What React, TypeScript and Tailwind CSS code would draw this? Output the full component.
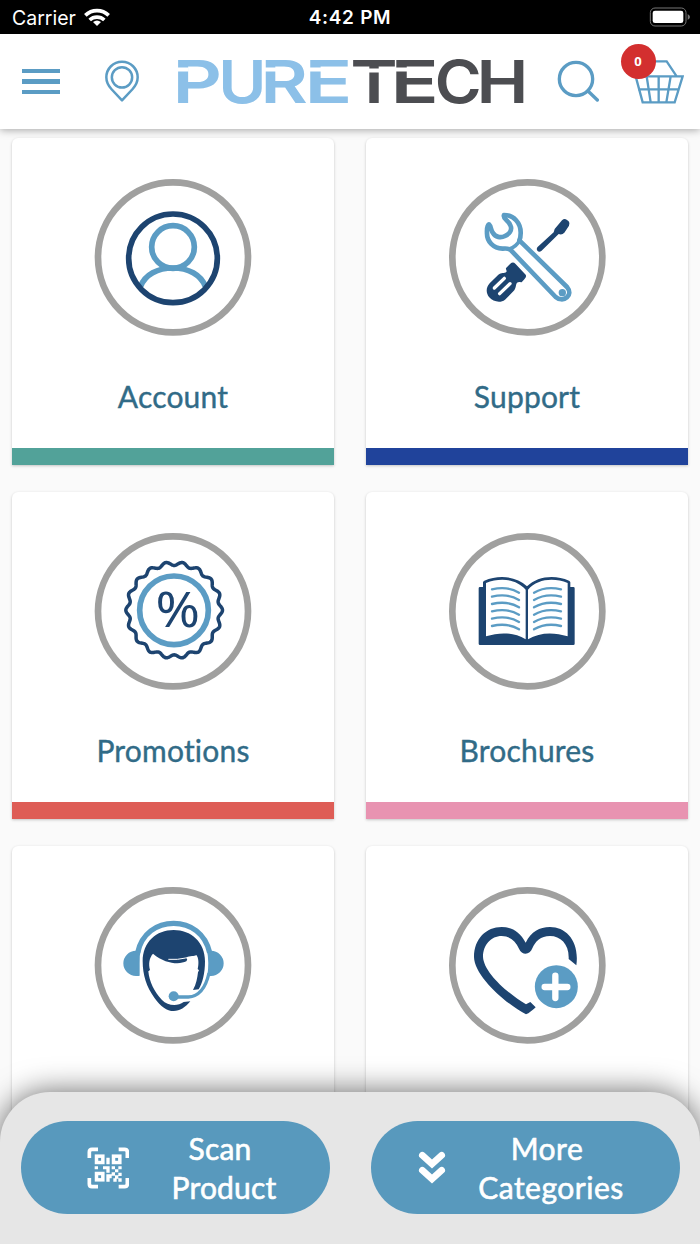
import type { ReactNode } from "react";

const NAVY = "#1d4470";
const BLUE = "#5b9cc4";

function Wifi() {
  return (
    <svg className="-mt-[3px] h-[18px] w-[26px]" viewBox="0 0 78 54" fill="none" stroke="#fff" strokeWidth="11">
      <path d="M4 22A50 50 0 0 1 74 22" />
      <path d="M17 36A32 32 0 0 1 61 36" />
      <path d="M39 54L27 42Q39 33 51 42Z" fill="#fff" stroke="none" />
    </svg>
  );
}

function Battery() {
  return (
    <svg className="h-[20px] w-[42px]" viewBox="0 0 126 60" fill="none">
      <rect x="4" y="3" width="107" height="54" rx="14" stroke="#777" strokeWidth="3" />
      <rect x="11" y="11" width="92" height="37" rx="7" fill="#fff" />
      <path d="M116 21Q123 25 123 30Q123 35 116 39Z" fill="#777" />
    </svg>
  );
}

function PinIcon() {
  return (
    <svg className="h-[42px] w-[36px]" viewBox="0 0 108 126" fill="none" stroke={BLUE} strokeWidth="7.5">
      <path d="M54 121L22 87C12 76 7 65 7 52A47 47 0 0 1 101 52C101 65 96 76 86 87Z" strokeLinejoin="round" />
      <circle cx="54" cy="52" r="30.5" />
    </svg>
  );
}

const logoLetters = [
  { letter: "P", x: -4.6, stretch: 1.29, fill: "#8cc0e8" },
  { letter: "U", x: 41.3, stretch: 1.1, fill: "#8cc0e8" },
  { letter: "R", x: 83.4, stretch: 1.22, fill: "#8cc0e8" },
  { letter: "E", x: 127.6, stretch: 1.33, fill: "#8cc0e8" },
  { letter: "T", x: 173.3, stretch: 1.21, fill: "#4c4d51" },
  { letter: "E", x: 213.4, stretch: 1.34, fill: "#4c4d51" },
  { letter: "C", x: 257.8, stretch: 1.07, fill: "#4c4d51" },
  { letter: "H", x: 299.6, stretch: 1.17, fill: "#4c4d51" },
];

function Logo() {
  return (
    <svg
      className="h-[74px] w-[350px] overflow-visible"
      viewBox="0 -12 350 74"
      fontFamily="Inter, sans-serif"
      fontWeight="600"
      fontSize="59.5"
    >
      {logoLetters.map(({ letter, x, stretch, fill }, i) => (
        <text key={i} y="47" transform={`translate(${x} 0) scale(${stretch} 1)`} fill={fill}>
          {letter}
        </text>
      ))}
      <g fill="#fff">
        <rect x="-1" y="11.5" width="12.5" height="4" />
        <rect x="87" y="11.5" width="12" height="4" />
        <rect x="131" y="11.5" width="13" height="4" />
        <rect x="188" y="12.5" width="15" height="4" />
        <rect x="217" y="11.5" width="13" height="4" />
      </g>
    </svg>
  );
}

function SearchIcon() {
  return (
    <svg className="h-[42px] w-[42px]" viewBox="0 0 126 126" fill="none" stroke={BLUE} strokeLinecap="round">
      <circle cx="57" cy="57" r="50" strokeWidth="10" />
      <path d="M93 93L121 120" strokeWidth="10" />
    </svg>
  );
}

function BasketIcon() {
  return (
    <svg className="h-[44px] w-[50px]" viewBox="0 0 150 132" fill="none" stroke={BLUE} strokeWidth="7">
      <path d="M20 49L45 4H98L128 49M2 49H146L122 127H26L5 49M12 88H134M38 49L50 127M74 49V127M110 49L97 127" />
    </svg>
  );
}

function AccountArt() {
  return (
    <g fill="none" strokeWidth="17">
      <circle cx="264" cy="231" r="64" stroke={BLUE} />
      <path d="M167 349C180 314 218 294 264 294S347 314 361 349" stroke={BLUE} />
      <circle cx="264" cy="265" r="133" stroke={NAVY} />
    </g>
  );
}

function SupportArt() {
  return (
    <g>
      <path
        d="M292 232L341 187L344 177L366 151Q373 144 380 149L386 154Q391 160 387 167L373 188Q366 196 356 192L304 243Q297 248 292 242Q288 237 292 232Z"
        fill={NAVY}
      />
      <path
        d="M211 281Q219 274 226 281L257 314Q261 320 253 328L245 337Q236 334 231 338C227 343 229 354 220 364L195 389C181 400 159 395 147 381C137 368 138 352 149 340L175 314C184 307 193 311 199 306C202 300 195 298 199 293Z"
        fill={NAVY}
      />
      <g stroke="#fff" strokeWidth="10" strokeLinecap="round">
        <path d="M163 354L193 325" />
        <path d="M179 371L210 341" />
      </g>
      <g fill="none" stroke={BLUE} strokeWidth="14" strokeLinejoin="round" strokeLinecap="round">
        <path d="M192 135C221 135 243 159 242 190Q242 203 238 211L381 351C391 363 389 375 381 382C371 391 356 389 347 381L211 239Q202 234 188 236C160 234 140 215 141 188Q140 167 147 163C153 168 153 183 159 189C166 201 182 205 195 198C207 192 217 181 212 168C208 151 187 148 192 135Z" />
        <path d="M239 211Q229 230 208 237" strokeWidth="11" />
      </g>
      <circle cx="367" cy="368" r="11" fill={BLUE} />
    </g>
  );
}

const sealPath =
  Array.from({ length: 361 }, (_, i) => {
    const t = (i * Math.PI) / 180;
    const r = 139.5 + 5.5 * Math.cos(18 * t);
    return `${i ? "L" : "M"}${(267.5 + r * Math.cos(t)).toFixed(1)} ${(255.5 + r * Math.sin(t)).toFixed(1)}`;
  }).join("") + "Z";

function PromotionsArt() {
  return (
    <g fill="none">
      <path d={sealPath} stroke={NAVY} strokeWidth="10.5" strokeLinejoin="round" />
      <circle cx="267" cy="256" r="103" stroke={BLUE} strokeWidth="17" />
      <text
        x="252.7"
        y="307"
        textAnchor="middle"
        transform="scale(1.1 1)"
        fontFamily="Noto Sans, sans-serif"
        fontSize="146"
        fill={NAVY}
      >
        %
      </text>
    </g>
  );
}

function BrochuresArt() {
  const rows = [188, 210, 232, 254, 276, 298];
  return (
    <g>
      <path
        d="M120 186H129V172Q129 169 133 167C176 148 229 153 261 184C292 153 345 148 387 167Q391 169 391 172V186H400Q404 186 404 190V356Q404 360 400 360H120Q116 360 116 356V190Q116 186 120 186Z"
        fill={NAVY}
      />
      <path d="M138 174C180 157 229 161 257 194V343C221 321 179 321 138 334Z" fill="#fff" />
      <path d="M383 174C342 157 292 161 264 194V343C299 321 342 321 383 334Z" fill="#fff" />
      <g fill="none" stroke={BLUE} strokeWidth="7" strokeLinecap="round">
        {rows.map((y) => (
          <g key={y}>
            <path d={`M156 ${y + 5}Q202 ${y - 6} 237 ${y + 15}`} />
            <path d={`M363 ${y + 5}Q318 ${y - 6} 282 ${y + 15}`} />
          </g>
        ))}
      </g>
    </g>
  );
}

function AgentArt() {
  return (
    <g>
      <path d="M153 218A38 38 0 0 0 153 294Q159 295 164 293V255Q163 235 167 217Z" fill={BLUE} />
      <path d="M378 218A38 38 0 0 1 378 294L367 295Q373 250 366 218Z" fill={BLUE} />
      <path d="M158 224C170 166 216 136 266 136S361 166 374 224" fill="none" stroke={BLUE} strokeWidth="16" />
      <path
        d="M173 250C173 192 214 156 266 156S360 192 360 250C360 286 352 318 341 334L324 336C334 318 337 300 339 283L342 277L338 273C342 257 341 239 334 231C327 236 318 231 300 240C309 241 307 246 304 250C285 260 242 259 204 227C193 239 190 258 195 276L190 280C193 312 208 341 231 366C248 384 278 386 296 372L316 370C300 389 285 399 266 399C245 399 228 386 208 359C185 328 173 291 173 250Z"
        fill={NAVY}
      />
      <path d="M250 244Q278 246 302 240" stroke="#fff" strokeWidth="3" fill="none" />
      <path d="M372 285C363 326 344 355 310 357H270" fill="none" stroke={BLUE} strokeWidth="10" />
      <circle cx="266" cy="355" r="15" fill={BLUE} />
    </g>
  );
}

function FavouritesArt() {
  return (
    <g>
      <path
        d="M409 262L386 243C388 199 362 174 330 174C302 174 286 190 277 211C270 231 246 233 237 212C226 188 209 174 185 174C153 174 129 201 129 236C131 283 202 345 258 379L271 372L287 388C279 395 267 407 258 409C203 381 103 297 102 237C102 182 139 147 185 147C216 147 240 161 257 194C274 161 298 147 330 147C379 147 419 190 409 262Z"
        fill={NAVY}
      />
      <circle cx="349" cy="326" r="64.5" fill={BLUE} />
      <path d="M314 327H382M346 293V360" stroke="#fff" strokeWidth="19" strokeLinecap="round" />
    </g>
  );
}

type CardProps = {
  label: string;
  bar: string;
  viewBox: string;
  cx: number;
  cy: number;
  children: ReactNode;
};

function Card({ label, bar, viewBox, cx, cy, children }: CardProps) {
  return (
    <section className="flex h-[327px] flex-col rounded-t-md bg-white shadow-[0_1px_3px_rgba(0,0,0,0.22)]">
      <div className="flex flex-1 flex-col pt-8">
        <svg className="ml-[73px] h-[175px] w-[175px]" viewBox={viewBox} overflow="visible">
          <circle cx={cx} cy={cy} r="225" fill="none" stroke="#a0a09f" strokeWidth="20" />
          {children}
        </svg>
        <h2 className="mt-[31px] text-center font-[Lato,sans-serif] text-[30px] leading-10 tracking-[0.2px] text-[#316b87] [font-variant-ligatures:none] [-webkit-text-stroke:0.4px_#316b87]">
          {label}
        </h2>
      </div>
      <div className={`h-[17px] ${bar}`} />
    </section>
  );
}

function ScanIcon() {
  return (
    <svg className="h-[42px] w-[42px]" viewBox="0 0 126 126" fill="none">
      <path
        d="M33 7H15Q7 7 7 15V33M95 7H113Q121 7 121 15V33M33 119H15Q7 119 7 111V93M95 119H113Q121 119 121 111V93"
        stroke="#fff"
        strokeWidth="11"
      />
      <g stroke="#fff" strokeWidth="10.5">
        <rect x="28.5" y="27.5" width="19" height="19" />
        <rect x="79.5" y="27.5" width="19" height="19" />
        <rect x="28.5" y="79.5" width="19" height="19" />
      </g>
      <path
        d="M58 32h10v20h-10zM23 58h10v9h-10zM48 58h20v19h-10v-10h-10zM74 58h10v9h-10zM94 58h10v9h-10zM84 67h10v9h-10zM58 82h16v-6h10v10h-10v8h-6v10h-10zM94 77h10v10h-10zM84 85h10v10h-10zM94 94h10v10h-10zM79 94h10v10h-10z"
        fill="#fff"
      />
    </svg>
  );
}

function ChevronsIcon() {
  return (
    <svg
      className="h-[34px] w-[28px]"
      viewBox="0 0 84 102"
      fill="none"
      stroke="#fff"
      strokeWidth="20"
      strokeLinejoin="miter"
      strokeLinecap="round"
    >
      <path d="M13 13L42 39L71 13M13 58L42 84L71 58" />
    </svg>
  );
}

export default function App() {
  return (
    <div className="flex h-[1244px] w-[700px] flex-col overflow-hidden bg-[#fafafa]">
      <div className="grid h-[34px] shrink-0 grid-cols-3 items-center bg-black pr-[9px] pl-3 font-[Inter,sans-serif] text-[19.5px] text-white">
        <div className="flex items-center gap-[8px] pt-[3px]">
          <span>Carrier</span>
          <Wifi />
        </div>
        <span className="pt-[3px] pr-[3px] text-center text-[19px] font-semibold tracking-[0.7px]">4:42 PM</span>
        <div className="flex justify-end">
          <Battery />
        </div>
      </div>

      <header className="relative flex h-[94.5px] shrink-0 items-start bg-white pl-[22px] shadow-[0_1px_8px_rgba(0,0,0,0.35)]">
        <div className="mt-[34.5px] flex w-[38px] flex-col gap-[6.5px]">
          <span className="h-[4.3px] bg-[#5b9cc4]" />
          <span className="h-[4.3px] bg-[#5b9cc4]" />
          <span className="h-[4.3px] bg-[#5b9cc4]" />
        </div>
        <div className="mt-[26px] ml-[44px]">
          <PinIcon />
        </div>
        <div className="mt-[10px] ml-[37px]">
          <Logo />
        </div>
        <div className="mt-[26px] ml-[30px]">
          <SearchIcon />
        </div>
        <div className="relative mt-[26px] ml-[35px]">
          <BasketIcon />
          <span className="absolute -top-[16px] -left-[13.5px] flex h-[35px] w-[35px] items-center justify-center rounded-full bg-[#d32f2f] font-['Open_Sans',sans-serif] text-[13px] font-bold text-white">
            0
          </span>
        </div>
      </header>

      <main className="grid min-h-0 flex-1 grid-cols-2 content-start gap-x-8 gap-y-[27px] overflow-hidden px-3 pt-[9.5px]">
        <Card label="Account" bar="bg-[#52a299]" viewBox="0 0 525 525" cx={264} cy={262}>
          <AccountArt />
        </Card>
        <Card label="Support" bar="bg-[#20439b]" viewBox="-3 0 525 525" cx={262} cy={262}>
          <SupportArt />
        </Card>
        <Card label="Promotions" bar="bg-[#de5d56]" viewBox="0 -3 525 525" cx={264} cy={259}>
          <PromotionsArt />
        </Card>
        <Card label="Brochures" bar="bg-[#e893b1]" viewBox="-3 -3 525 525" cx={262} cy={259}>
          <BrochuresArt />
        </Card>
        <Card label="Contact" bar="bg-[#5b9cc4]" viewBox="0 0 525 525" cx={264} cy={262}>
          <AgentArt />
        </Card>
        <Card label="Favourites" bar="bg-[#1d4470]" viewBox="-3 0 525 525" cx={262} cy={262}>
          <FavouritesArt />
        </Card>
      </main>

      <footer className="relative -mt-[52px] flex h-[152px] shrink-0 items-start justify-between rounded-t-[50px] bg-[#e6e6e6] px-[20.5px] pt-[29px] font-[Lato,sans-serif] text-[30px] leading-[39px] text-white shadow-[0_0_30px_rgba(0,0,0,0.6)]">
        <button className="flex h-[93px] w-[309px] items-center rounded-full bg-[#5899bd] pl-[66.5px] tracking-[0.2px] [-webkit-text-stroke:0.6px_#fff]">
          <ScanIcon />
          <span className="ml-[42px] w-[106px] text-center">
            <span className="block pr-[8px]">Scan</span>
            <span className="block">Product</span>
          </span>
        </button>
        <button className="flex h-[93px] w-[309px] items-center rounded-full bg-[#5899bd] pl-[47.5px] tracking-[0.5px] [-webkit-text-stroke:0.6px_#fff]">
          <ChevronsIcon />
          <span className="ml-[30px] w-[150px] text-center">
            <span className="block pr-[8px]">More</span>
            <span className="block">Categories</span>
          </span>
        </button>
      </footer>
    </div>
  );
}
